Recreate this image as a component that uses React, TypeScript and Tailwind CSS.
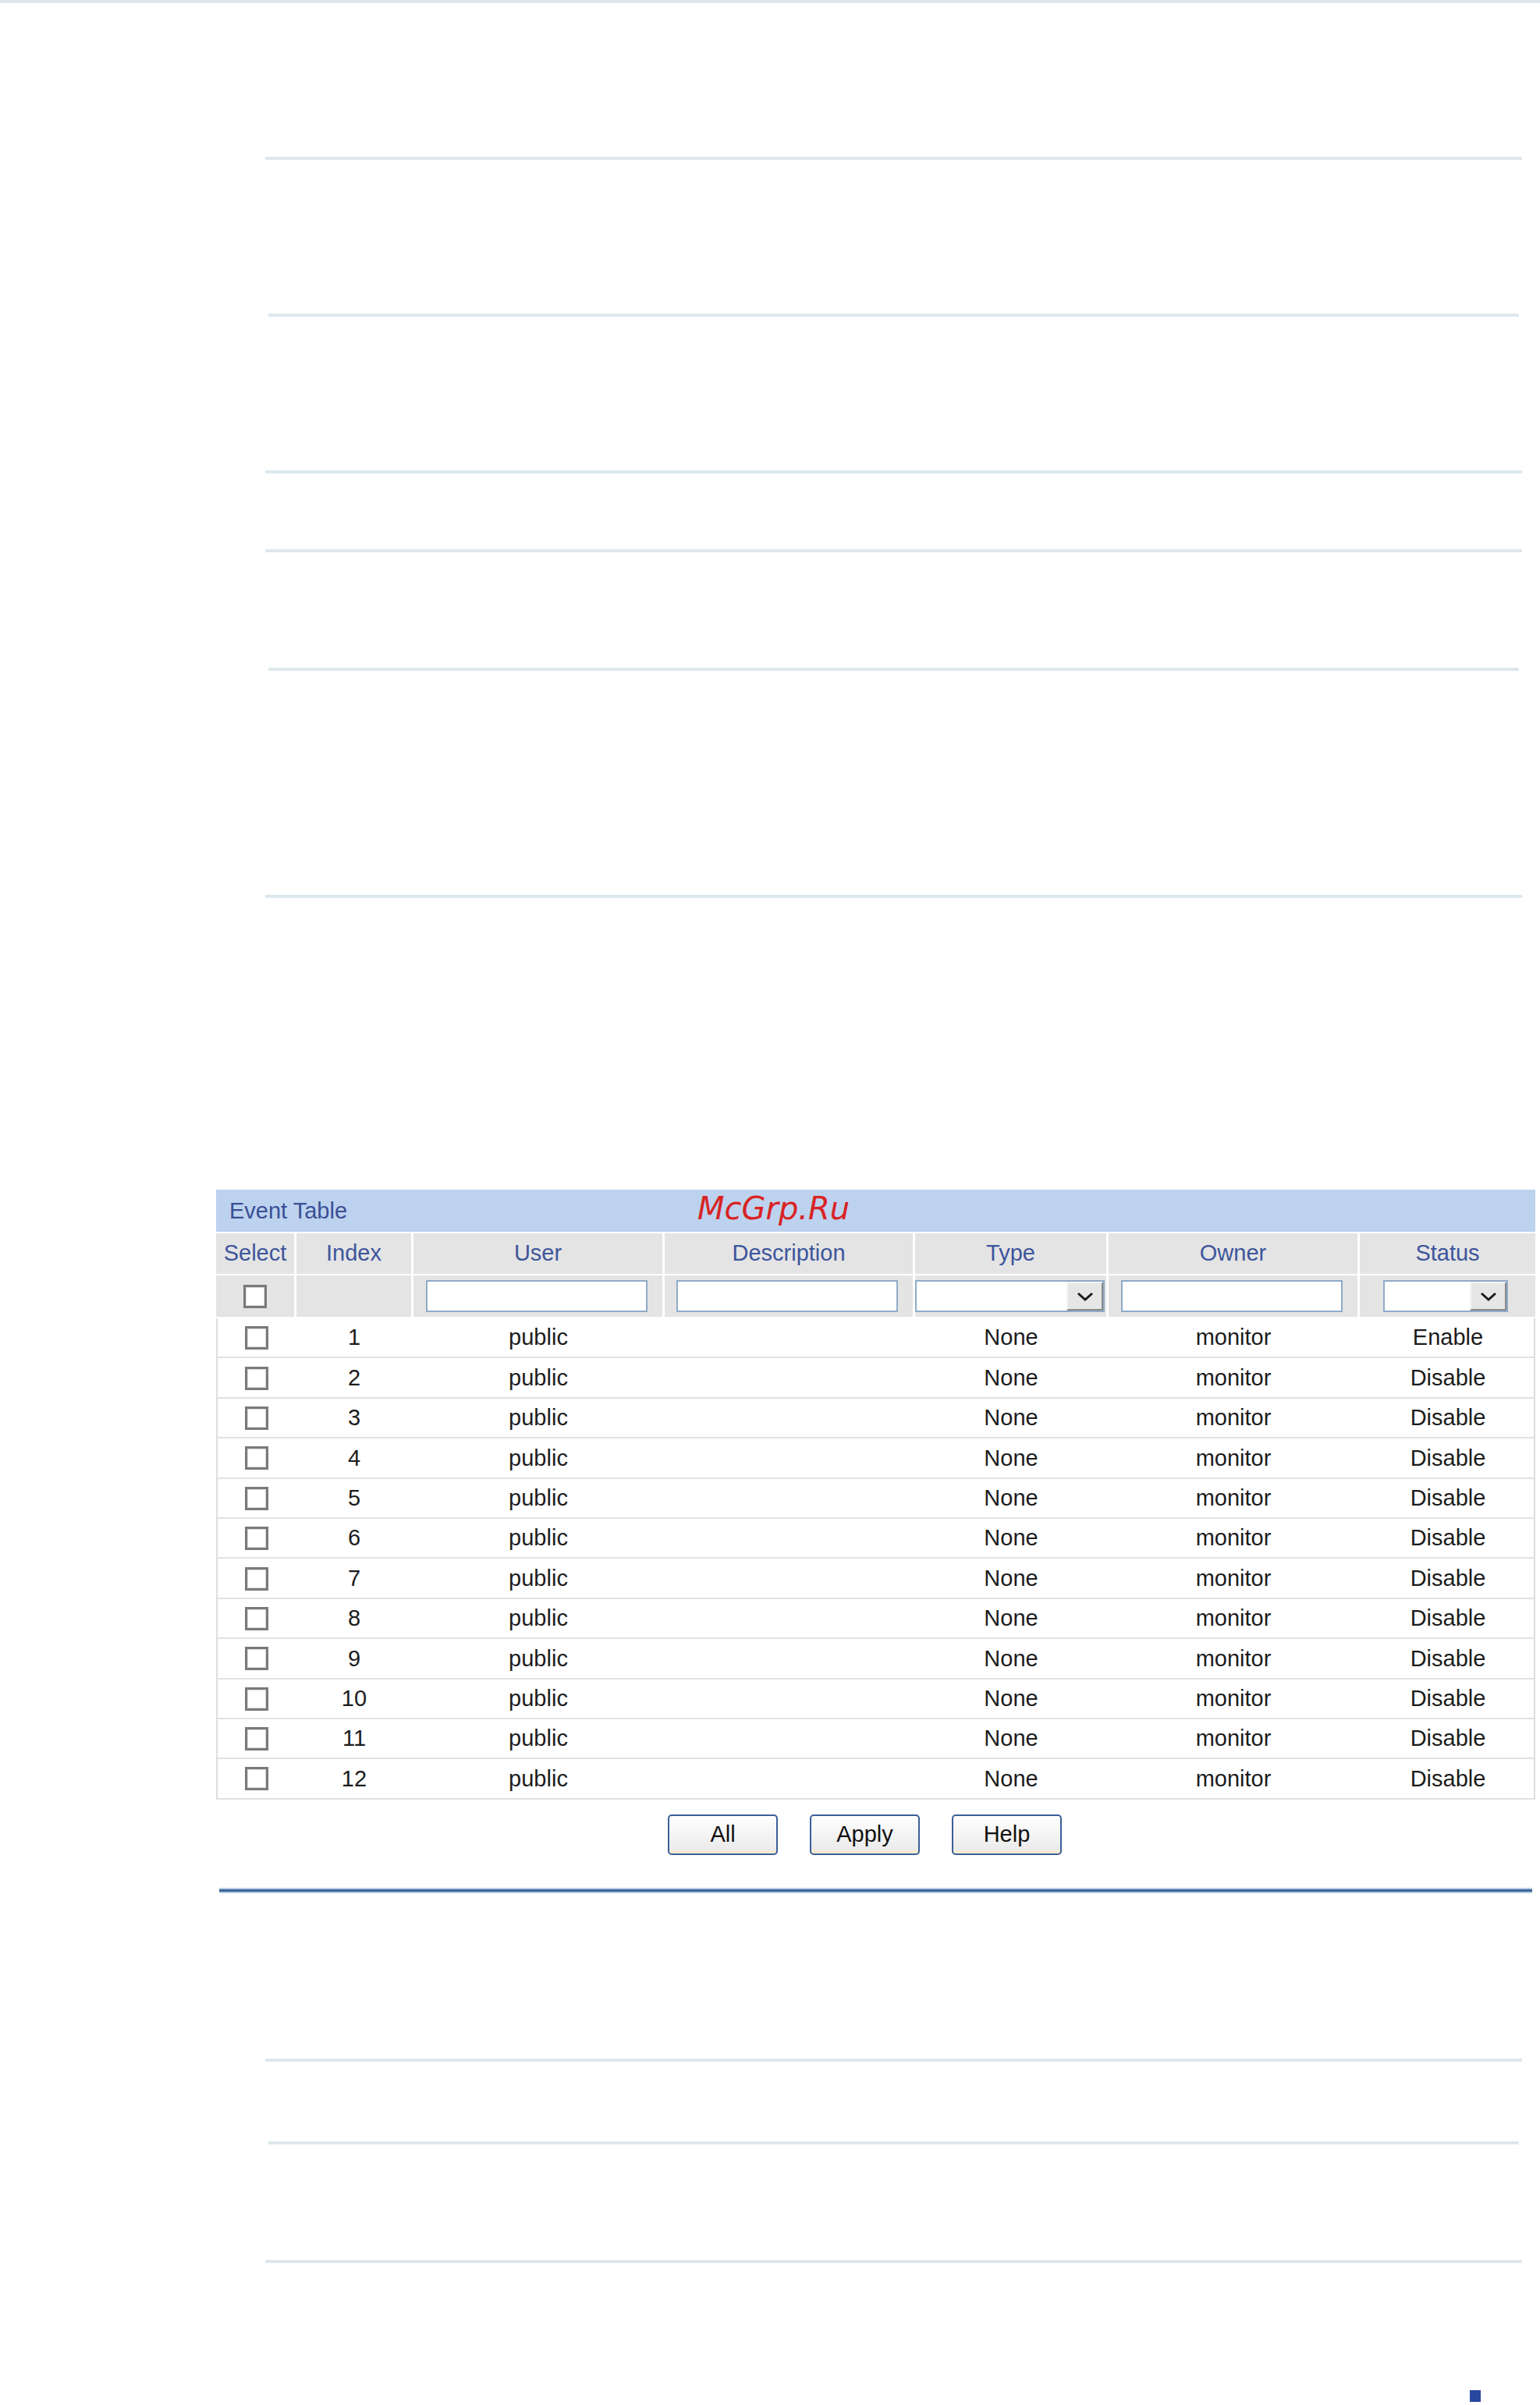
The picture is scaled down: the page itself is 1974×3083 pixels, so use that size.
import React from 'react';

const FONT = { fontFamily: '"Liberation Sans", Arial, sans-serif' };

const columns = ['Select', 'Index', 'User', 'Description', 'Type', 'Owner', 'Status'];

const rows = Array.from({ length: 12 }, (_, i) => ({
  index: i + 1,
  user: 'public',
  description: '',
  type: 'None',
  owner: 'monitor',
  status: i === 0 ? 'Enable' : 'Disable',
}));

const gridCols = 'grid grid-cols-[100px_150px_322px_321px_248px_322px_228px]';

const Rule = ({ className }: { className: string }) => (
  <div className={`h-[4px] bg-[#dde8ee] ${className}`} />
);

const CheckBox = () => (
  <div className="w-[30px] h-[30px] border-[3px] border-[#7a7a7a] bg-white shadow-[inset_0_0_0_1px_#dcdcdc]" />
);

const TextBox = ({ width }: { width: string }) => (
  <div className={`h-[41px] ${width} border-2 border-[#8fabc9] bg-white`} />
);

const SelectBox = ({ width }: { width: string }) => (
  <div className={`h-[41px] ${width} border-2 border-[#8fabc9] bg-white flex justify-end`}>
    <div className="w-[47px] h-full bg-[#e6e6e6] border-l-2 border-t-2 border-l-[#f4f4f4] border-t-[#f4f4f4] border-r-2 border-b-2 border-r-[#8a8a8a] border-b-[#8a8a8a] flex items-center justify-center">
      <svg width="22" height="14" viewBox="0 0 22 14">
        <polyline points="2,3 11,11 20,3" fill="none" stroke="#1a1a1a" strokeWidth="3" />
      </svg>
    </div>
  </div>
);

const Button = ({ label }: { label: string }) => (
  <button
    className="w-[141px] h-[52px] rounded-[5px] border-2 border-[#3b5f98] bg-gradient-to-b from-white to-[#e9e9e9] text-[29px] text-[#111] leading-none shadow-[inset_0_-4px_0_#f3ecd2]"
    style={FONT}
  >
    {label}
  </button>
);

const EventTable = () => (
  <div className="ml-[277px] w-[1691px]" style={FONT}>
    {/* title band */}
    <div className="relative h-[54px] bg-[#bdd2ee] flex items-center pl-[17px]">
      <span className="text-[29px] text-[#3a4f96] leading-none">Event Table</span>
      <span
        className="absolute left-[617px] top-[-3px] text-[40px] italic text-[#d92323] leading-[54px]"
        style={{ fontFamily: '"DejaVu Sans", sans-serif' }}
      >
        McGrp.Ru
      </span>
    </div>

    {/* column headers */}
    <div className={`${gridCols} mt-[2px] h-[52px]`}>
      {columns.map((c, i) => (
        <div
          key={c}
          className={`bg-[#e4e4e4] flex items-center justify-center text-[29px] text-[#3d559c] ${i > 0 ? 'border-l-[3px] border-white' : ''}`}
        >
          {c}
        </div>
      ))}
    </div>

    {/* filter row */}
    <div className={`${gridCols} mt-[2px] h-[55px] border-b-2 border-white`}>
      <div className="bg-[#e4e4e4] flex items-center justify-center">
        <CheckBox />
      </div>
      <div className="bg-[#e4e4e4] border-l-[3px] border-white" />
      <div className="bg-[#e4e4e4] border-l-[3px] border-white flex items-center pl-[16px]">
        <TextBox width="w-[284px]" />
      </div>
      <div className="bg-[#e4e4e4] border-l-[3px] border-white flex items-center pl-[15px]">
        <TextBox width="w-[284px]" />
      </div>
      <div className="bg-[#e4e4e4] border-l-[3px] border-white flex items-center pl-0">
        <SelectBox width="w-[243px]" />
      </div>
      <div className="bg-[#e4e4e4] border-l-[3px] border-white flex items-center pl-[16px]">
        <TextBox width="w-[284px]" />
      </div>
      <div className="bg-[#e4e4e4] border-l-[3px] border-white flex items-center pl-[30px]">
        <SelectBox width="w-[160px]" />
      </div>
    </div>

    {/* data rows */}
    <div className="border-x-2 border-[#dedede]">
      {rows.map((r) => (
        <div
          key={r.index}
          className={`${gridCols} h-[51.4px] border-b-2 border-[#e2e2e2] text-[29px] text-[#1c1c1c] pt-[1px]`}
        >
          <div className="flex items-center justify-center">
            <CheckBox />
          </div>
          <div className="flex items-center justify-center">{r.index}</div>
          <div className="flex items-center justify-center">{r.user}</div>
          <div className="flex items-center justify-center">{r.description}</div>
          <div className="flex items-center justify-center">{r.type}</div>
          <div className="flex items-center justify-center">{r.owner}</div>
          <div className="flex items-center justify-center">{r.status}</div>
        </div>
      ))}
    </div>

    {/* buttons */}
    <div className="mt-[19px] flex gap-[41px] pl-[579px]">
      <Button label="All" />
      <Button label="Apply" />
      <Button label="Help" />
    </div>
  </div>
);

export default function App() {
  return (
    <div className="w-[1974px] h-[3083px] bg-white overflow-hidden">
      <div className="h-[4px] w-full bg-[#dde8ee]" />

      <Rule className="mt-[197px] ml-[340px] w-[1611px]" />
      <Rule className="mt-[197px] ml-[344px] w-[1603px]" />
      <Rule className="mt-[197px] ml-[340px] w-[1611px]" />
      <Rule className="mt-[97px] ml-[340px] w-[1611px]" />
      <Rule className="mt-[148px] ml-[344px] w-[1603px]" />
      <Rule className="mt-[287px] ml-[340px] w-[1611px]" />

      <div className="mt-[374px]">
        <EventTable />
      </div>

      {/* section divider */}
      <div className="mt-[42px] ml-[281px] w-[1683px] h-[7px] bg-[#3d6699] border-y-2 border-[#b7cbe1]" />

      <Rule className="mt-[212px] ml-[340px] w-[1611px]" />
      <Rule className="mt-[102px] ml-[344px] w-[1603px]" />
      <Rule className="mt-[148px] ml-[340px] w-[1611px]" />

      <div className="mt-[163px] ml-[1884px] w-[14px] h-[15px] bg-[#2a47a0]" />
    </div>
  );
}
